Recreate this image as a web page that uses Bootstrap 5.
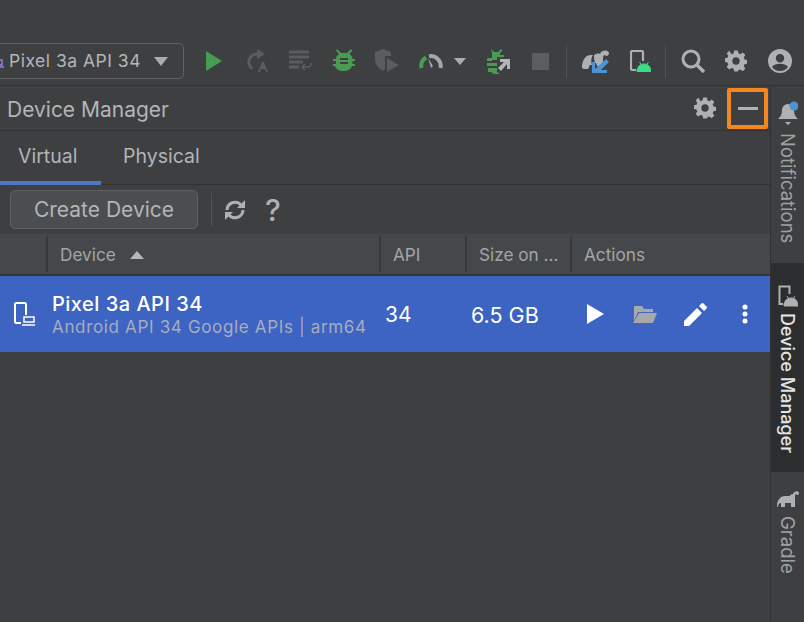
<!DOCTYPE html>
<html lang="en">
<head>
  <meta charset="UTF-8" />
  <meta name="viewport" content="width=device-width, initial-scale=1" />
  <title>Device Manager</title>
  <link href="https://cdn.jsdelivr.net/npm/bootstrap@5.3.0/dist/css/bootstrap.min.css" rel="stylesheet" />
  <style>
    html, body { height: 100%; }
    body { background: #3d3f41; color: #a9abad; font-family: Inter, "Liberation Sans", sans-serif; overflow: hidden; }
    .ide { width: 804px; height: 622px; }
    svg { display: block; }
    .top-bar { height: 86px; padding-top: 43px; border-bottom: 1px solid #323232; flex: none; }
    .run-select { width: 194px; height: 36px; margin-left: -10px; border: 1.5px solid #5f6163; border-radius: 5px; padding-left: 3px; font-size: 17.5px; letter-spacing: .5px; color: #b4b6b8; flex: none; }
    .run-select .dev-mini { width: 10px; height: 10px; margin-right: 5px; margin-top: 4px; }
    .caret-down { width: 0; height: 0; border-left: 7.5px solid transparent; border-right: 7.5px solid transparent; border-top: 9px solid #aaacae; }
    .select-caret { margin-left: 13px; }
    .small-caret { border-left-width: 6.5px; border-right-width: 6.5px; border-top-width: 7px; margin-left: 1px; }
    .tool-slot { width: 43.5px; height: 36px; flex: none; }
    .slot-attach { margin-left: 12px; }
    .slot-stop { margin-left: -3px; }
    .slot-gradle { margin-left: 7px; }
    .slot-device { margin-left: 1px; }
    .slot-search { margin-left: 5px; }
    .tool-sep { width: 1px; height: 33px; background: #505254; flex: none; }
    .sep-one { margin-left: 4px; }
    .sep-two { margin-left: 3px; }
    .main-area { min-height: 0; }
    .panel-side { width: 770px; flex: none; }
    .panel-head { height: 45px; border-bottom: 1px solid #323232; padding-left: 7px; font-size: 21px; color: #b3b5b7; flex: none; }
    .panel-title { padding-top: 3px; }
    .hide-box { width: 41px; height: 41px; border: 4px solid #f5871f; border-radius: 2px; margin-right: 2px; margin-left: 11px; }
    .hide-box span { width: 20px; height: 3px; background: #afb1b3; }
    .tab-strip { height: 54px; border-bottom: 1px solid #323232; font-size: 19.5px; flex: none; }
    .tab-item { height: 53px; padding-bottom: 2px; color: #b3b5b7; }
    .tab-active { width: 101px; border-bottom: 4px solid #4a78c2; margin-bottom: -1px; height: 54px; padding-left: 18px; padding-bottom: 0; padding-top: 2px; }
    .tab-other { padding-left: 22px; }
    .action-bar { height: 49px; padding-left: 10px; flex: none; }
    .create-btn { width: 188px; height: 39px; background: #4b4e50; border: 1.5px solid #5e6163; border-radius: 5px; color: #b3b5b7; font-size: 21px; padding: 1px 0 0; }
    .bar-sep { width: 1px; height: 33px; background: #515355; margin: 0 12px 0 13px; }
    .refresh-ic { margin-right: 19px; }
    .help-mark { font-size: 30px; font-weight: 500; line-height: 1; color: #aeb0b2; }
    .table-head { height: 42px; background: #45484a; border-bottom: 2px solid #323436; font-size: 17.2px; color: #a3a5a7; flex: none; }
    .head-cell { height: 36px; border-left: 2px solid #38393b; padding-left: 12px; padding-top: 1px; flex: none; }
    .col-a { width: 46px; border-left: 0; }
    .col-b { width: 333px; }
    .col-c { width: 86px; }
    .col-d { width: 105px; }
    .col-e { width: 199px; }
    .sort-up { width: 0; height: 0; border-left: 7.5px solid transparent; border-right: 7.5px solid transparent; border-bottom: 8px solid #b4b6b8; margin-left: 14px; }
    .device-row { height: 76px; background: #3d63c3; color: #fff; flex: none; }
    .dev-ic { width: 52px; padding-left: 14px; flex: none; }
    .dev-info { width: 333px; flex: none; padding-top: 2px; }
    .dev-name { font-size: 20px; letter-spacing: .5px; line-height: 24px; font-weight: 500; }
    .dev-sub { font-size: 17px; letter-spacing: .66px; line-height: 23px; color: #a7adbc; white-space: nowrap; }
    .dev-api { width: 86px; font-size: 21px; flex: none; padding-top: 2px; }
    .dev-size { width: 99px; font-size: 21.5px; flex: none; padding-top: 2px; }
    .dev-act { width: 50px; flex: none; }
    .right-rail { width: 34px; flex: none; background: #3d3f41; border-left: 1px solid #323232; }
    .rail-tab { writing-mode: vertical-rl; font-size: 18.5px; color: #9fa1a3; white-space: nowrap; }
    .rail-item { padding-top: 15px; gap: 6px; }
    .rail-notif { height: 177px; }
    .rail-dev { height: 209px; background: #2c2d2f; padding-top: 22px; gap: 6px; }
    .rail-dev .rail-tab { color: #e4e4e4; font-weight: 500; font-size: 18px; }
    .rail-gradle { padding-top: 18px; gap: 8px; }
  </style>
</head>
<body>
<div class="ide d-flex flex-column">

  <div class="top-bar d-flex align-items-start">
    <div class="run-select d-flex align-items-center">
      <svg class="dev-mini" viewBox="0 0 10 10"><path d="M1 2h7v5H1zM0 9h10" fill="none" stroke="#9a7fe0" stroke-width="1.4"/></svg>
      <span>Pixel 3a API 34</span>
      <span class="caret-down select-caret"></span>
    </div>
    <div class="d-flex align-items-center ms-2">
      <div class="tool-slot d-flex align-items-center justify-content-center">
        <svg width="20" height="22" viewBox="0 0 20 22"><path d="M2 1l16 10L2 21z" fill="#499c54"/></svg>
      </div>
      <div class="tool-slot d-flex align-items-center justify-content-center">
        <svg width="24" height="24" viewBox="0 0 24 24"><path d="M12 5a8 8 0 0 0-7 12l2 3" fill="none" stroke="#5a5c5e" stroke-width="3"/><path d="M12 0l8 5-8 5z" fill="#5a5c5e"/><path d="M13 23l4-10h2l4 10h-2l-1-3h-4l-1 3z" fill="#5a5c5e"/></svg>
      </div>
      <div class="tool-slot d-flex align-items-center justify-content-center">
        <svg width="24" height="22" viewBox="0 0 24 22"><path d="M0 2h20M0 7h20M0 12h14M0 17h10" stroke="#5a5c5e" stroke-width="3"/><path d="M16 14l-3 3 3 3M13 17h6a3 3 0 0 0 3-3v-1" fill="none" stroke="#5a5c5e" stroke-width="1.5"/></svg>
      </div>
      <div class="tool-slot d-flex align-items-center justify-content-center">
        <svg width="22" height="24" viewBox="0 0 22 24"><path d="M4 0l4 4h6l4-4 1.500 1.500-3 3.500c2 1.500 3 3 3 5h3v2h-3v3h3v2h-3.500c-1 3-4 5-8.500 5s-7.500-2-8.500-5H0v-2h3v-3H0v-2h3c0-2 1-3.500 3-5L3 1.500z" fill="#499c54"/><path d="M7 10h8M7 14h8" stroke="#3d3f41" stroke-width="2"/></svg>
      </div>
      <div class="tool-slot d-flex align-items-center justify-content-center">
        <svg width="26" height="24" viewBox="0 0 26 24"><path d="M0 3l8-3 8 3v4h-6v13l-2 2c-5-3-8-7-8-12z" fill="#5a5c5e"/><path d="M12 9l12 7-12 7z" fill="#5a5c5e"/></svg>
      </div>
      <div class="tool-slot d-flex align-items-center justify-content-center">
        <svg width="24" height="16" viewBox="0 0 24 16"><path d="M2.500 15A10 10 0 0 1 7 4.500" fill="none" stroke="#499c54" stroke-width="4"/><path d="M10 3.200A10 10 0 0 1 21.500 15" fill="none" stroke="#a4a6a8" stroke-width="4"/><path d="M9 5l5 8-2 2z" fill="#a4a6a8"/></svg>
      </div>
      <span class="caret-down small-caret"></span>
      <div class="tool-slot slot-attach d-flex align-items-center justify-content-center">
        <svg width="25" height="25" viewBox="0 0 25 25"><g fill="#499c54"><path d="M4 0l3 3h4l3-3 1.500 1.500L13 4v2h4v2H5V4z"/><path d="M1 9h4v-1h5v3H5v1H0v-2zM0 14h10v3H0zM1 19h9v4l3 2H7l-3-2H1z"/></g><path d="M13 10h10v10h-3v-5l-6 7-3-3 6-6h-4z" fill="#b4b6b8"/></svg>
      </div>
      <div class="tool-slot slot-stop d-flex align-items-center justify-content-center">
        <svg width="17" height="17" viewBox="0 0 17 17"><rect width="17" height="17" fill="#5b5d5f"/></svg>
      </div>
      <div class="tool-sep sep-one"></div>
      <div class="tool-slot slot-gradle d-flex align-items-center justify-content-center">
        <svg width="27" height="23" viewBox="0 0 27 23"><path d="M0 18C0 9 4 5 9 5h2c-2 3-2 7-1 10H8l-2 4H2zM12 5c2-1 4-2 6-1 1-4 8-5 9-1 0 3-3 4-4 2-1 0-2 1-2 3v5l-3 3h-3l-1-3h-1c-1-3-1-6-1-8z" fill="#aeb0b2"/><path d="M24 9l3 3-8 8h6v3H10V12h3v7z" fill="#4b94d4"/></svg>
      </div>
      <div class="tool-slot slot-device d-flex align-items-center justify-content-center">
        <svg width="21" height="22" viewBox="0 0 21 22"><path d="M6 20H2.500A1.500 1.500 0 0 1 1 18.500v-16A1.500 1.500 0 0 1 2.500 1h9A1.500 1.500 0 0 1 13 2.500V11" fill="none" stroke="#aeb0b2" stroke-width="2.200"/><path d="M7 22c0-5 3-8 7-8s7 3 7 8zM9.500 12l2 3M18.500 12l-2 3" fill="#3ddc84" stroke="#3ddc84" stroke-width="1"/></svg>
      </div>
      <div class="tool-sep sep-two"></div>
      <div class="tool-slot slot-search d-flex align-items-center justify-content-center">
        <svg width="24" height="24" viewBox="0 0 24 24"><circle cx="10" cy="10" r="8" fill="none" stroke="#aeb0b2" stroke-width="3"/><path d="M16 16l7 7" stroke="#aeb0b2" stroke-width="3.400"/></svg>
      </div>
      <div class="tool-slot d-flex align-items-center justify-content-center">
        <svg width="22" height="22" viewBox="0 0 24 24"><path fill="#aeb0b2" fill-rule="evenodd" d="M10 1h4l.6 3.100 2.100.9 2.700-1.800 2.800 2.800-1.800 2.700.9 2.100 3 .6v4l-3 .6-.9 2.100 1.800 2.700-2.800 2.800-2.700-1.800-2.100.9L14 24h-4l-.6-3.100-2.100-.9-2.700 1.800-2.800-2.800 1.800-2.700-.9-2.100-3-.6v-4l3-.6.9-2.100-1.800-2.700 2.800-2.800L7.300 5l2.100-.9zM12 8.500a4 4 0 1 0 0 8 4 4 0 0 0 0-8z" transform="translate(0 -.5)"/></svg>
      </div>
      <div class="tool-slot d-flex align-items-center justify-content-center">
        <svg width="24" height="24" viewBox="0 0 24 24"><path fill="#aeb0b2" fill-rule="evenodd" d="M12 0a12 12 0 1 0 0 24 12 12 0 0 0 0-24zm0 5a4.200 4.200 0 1 1 0 8.400A4.200 4.200 0 0 1 12 5zm0 17a9.800 9.800 0 0 1-8-4c1.500-2.300 4.800-3.300 8-3.300s6.500 1 8 3.300a9.800 9.800 0 0 1-8 4z"/></svg>
      </div>
    </div>
  </div>

  <div class="main-area d-flex flex-grow-1">
    <div class="panel-side d-flex flex-column">
      <div class="panel-head d-flex align-items-center justify-content-between">
        <span class="panel-title">Device Manager</span>
        <div class="d-flex align-items-center">
          <svg width="22" height="22" viewBox="0 0 24 24"><path fill="#aeb0b2" fill-rule="evenodd" d="M10 1h4l.6 3.100 2.100.9 2.700-1.800 2.800 2.800-1.800 2.700.9 2.100 3 .6v4l-3 .6-.9 2.100 1.800 2.700-2.800 2.800-2.700-1.800-2.100.9L14 24h-4l-.6-3.100-2.100-.9-2.700 1.800-2.800-2.800 1.800-2.700-.9-2.100-3-.6v-4l3-.6.9-2.100-1.800-2.700 2.800-2.800L7.300 5l2.100-.9zM12 8.500a4 4 0 1 0 0 8 4 4 0 0 0 0-8z" transform="translate(0 -.5)"/></svg>
          <div class="hide-box d-flex align-items-center justify-content-center"><span></span></div>
        </div>
      </div>

      <div class="tab-strip d-flex">
        <div class="tab-item tab-active d-flex align-items-center">Virtual</div>
        <div class="tab-item tab-other d-flex align-items-center">Physical</div>
      </div>

      <div class="action-bar d-flex align-items-center">
        <button type="button" class="btn create-btn">Create Device</button>
        <div class="bar-sep"></div>
        <svg width="22" height="22" viewBox="0 0 22 22" class="refresh-ic"><path d="M3 11a8 8 0 0 1 14-5M19 11a8 8 0 0 1-14 5" fill="none" stroke="#aeb0b2" stroke-width="3"/><path d="M21 1v8h-8zM1 21v-8h8z" fill="#aeb0b2"/></svg>
        <span class="help-mark">?</span>
      </div>

      <div class="table-head d-flex align-items-center">
        <div class="head-cell col-a"></div>
        <div class="head-cell col-b d-flex align-items-center">Device<span class="sort-up"></span></div>
        <div class="head-cell col-c d-flex align-items-center">API</div>
        <div class="head-cell col-d d-flex align-items-center">Size on ...</div>
        <div class="head-cell col-e d-flex align-items-center">Actions</div>
      </div>

      <div class="device-row d-flex align-items-center">
        <div class="dev-ic">
          <svg width="21" height="24" viewBox="0 0 21 24"><path d="M7 21H2.500A1.500 1.500 0 0 1 1 19.500v-17A1.500 1.500 0 0 1 2.500 1h8A1.500 1.500 0 0 1 12 2.500V13" fill="none" stroke="#fff" stroke-width="2"/><path d="M10 15h10v5H10zM8 23h13" fill="none" stroke="#fff" stroke-width="1.500"/></svg>
        </div>
        <div class="dev-info">
          <div class="dev-name">Pixel 3a API 34</div>
          <div class="dev-sub">Android API 34 Google APIs | arm64</div>
        </div>
        <div class="dev-api">34</div>
        <div class="dev-size">6.5 GB</div>
        <div class="dev-act">
          <svg width="18" height="20" viewBox="0 0 18 20" class="mx-auto"><path d="M1 0l17 10L1 20z" fill="#fff"/></svg>
        </div>
        <div class="dev-act">
          <svg width="24" height="17" viewBox="0 0 24 17" class="mx-auto"><path d="M1 0h8l2 3h9v3H5L1 15zM6 7h18l-4 10H0z" fill="#a6a8aa"/></svg>
        </div>
        <div class="dev-act">
          <svg width="23" height="23" viewBox="0 0 23 23" class="mx-auto"><path d="M0 23v-5L13 5l5 5L5 23zM15 3l2.500-2.500a1.500 1.500 0 0 1 2 0l3 3a1.500 1.500 0 0 1 0 2L20 8z" fill="#fff"/></svg>
        </div>
        <div class="dev-act">
          <svg width="6" height="20" viewBox="0 0 6 20" class="mx-auto"><circle cx="3" cy="3" r="2.500" fill="#fff"/><circle cx="3" cy="10" r="2.500" fill="#fff"/><circle cx="3" cy="17" r="2.500" fill="#fff"/></svg>
        </div>
      </div>
    </div>

    <div class="right-rail d-flex flex-column">
      <div class="rail-item rail-notif d-flex flex-column align-items-center">
        <svg width="20" height="26" viewBox="0 0 20 26"><path d="M10 3a6 6 0 0 0-6 6c0 5-2 7-4 9h20c-2-2-4-4-4-9a6 6 0 0 0-6-6zM7 21h6l-3 3z" fill="#aeb0b2"/><circle cx="16" cy="5" r="4.500" fill="#4b94d4"/></svg>
        <span class="rail-tab">Notifications</span>
      </div>
      <div class="rail-item rail-dev d-flex flex-column align-items-center">
        <svg width="20" height="22" viewBox="0 0 20 22"><path d="M5 19H1.500V1.500h10V9" fill="none" stroke="#aeb0b2" stroke-width="2"/><path d="M6 21c0-5 3-8 7-8s7 3 7 8zM9 11l2 3M17 11l-2 3" fill="#aeb0b2" stroke="#aeb0b2" stroke-width="1"/></svg>
        <span class="rail-tab">Device Manager</span>
      </div>
      <div class="rail-item rail-gradle d-flex flex-column align-items-center">
        <svg width="22" height="18" viewBox="0 0 22 18"><path d="M0 17C0 10 3 6 8 6h4c1 0 2-2 4-2 1-3 5-4 6-1 0 2-2 3-3 1-1 0-1 2-1 4v9h-4v-4H8v4H4v-4c-2 0-3 2-3 4z" fill="#aeb0b2"/></svg>
        <span class="rail-tab">Gradle</span>
      </div>
    </div>
  </div>
</div>
<script src="https://cdn.jsdelivr.net/npm/bootstrap@5.3.0/dist/js/bootstrap.bundle.min.js"></script>
</body>
</html>
